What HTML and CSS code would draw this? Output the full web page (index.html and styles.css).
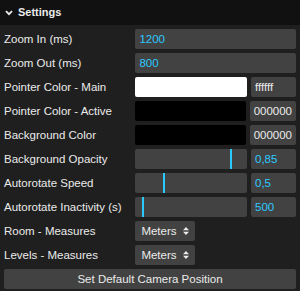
FILE: index.html
```html
<!DOCTYPE html>
<html lang="en">
<head>
<meta charset="UTF-8">
<title>Settings</title>
<link rel="stylesheet" href="styles.css">
</head>
<body>

<div class="gui">
  <div class="title">
    <svg class="chevron" width="8" height="6" viewBox="0 0 8 6"><path d="M1 1.2 L4 4.2 L7 1.2" fill="none" stroke="#ebebeb" stroke-width="1.8"/></svg>
    Settings
  </div>
  <div class="children">
    <div class="row">
      <div class="name">Zoom In (ms)</div>
      <div class="widget"><div class="field num">1200</div></div>
    </div>
    <div class="row">
      <div class="name">Zoom Out (ms)</div>
      <div class="widget"><div class="field num">800</div></div>
    </div>
    <div class="row">
      <div class="name">Pointer Color - Main</div>
      <div class="widget">
        <div class="swatch white"></div>
        <div class="field hex">ffffff</div>
      </div>
    </div>
    <div class="row">
      <div class="name">Pointer Color - Active</div>
      <div class="widget">
        <div class="swatch black"></div>
        <div class="field hex">000000</div>
      </div>
    </div>
    <div class="row">
      <div class="name">Background Color</div>
      <div class="widget">
        <div class="swatch black"></div>
        <div class="field hex">000000</div>
      </div>
    </div>
    <div class="row">
      <div class="name">Background Opacity</div>
      <div class="widget">
        <div class="slider"><div class="fill" style="width: 84.5%"></div></div>
        <div class="field num side">0,85</div>
      </div>
    </div>
    <div class="row">
      <div class="name">Autorotate Speed</div>
      <div class="widget">
        <div class="slider"><div class="fill" style="width: 25%"></div></div>
        <div class="field num side">0,5</div>
      </div>
    </div>
    <div class="row">
      <div class="name">Autorotate Inactivity (s)</div>
      <div class="widget">
        <div class="slider"><div class="fill" style="width: 5.5%"></div></div>
        <div class="field num side">500</div>
      </div>
    </div>
    <div class="row">
      <div class="name">Room - Measures</div>
      <div class="widget">
        <div class="select">Meters
          <svg class="arrows" width="6" height="8" viewBox="0 0 6 8"><path d="M3 0 L6 3.2 H0 Z M3 8 L6 4.8 H0 Z" fill="#ebebeb"/></svg>
        </div>
      </div>
    </div>
    <div class="row">
      <div class="name">Levels - Measures</div>
      <div class="widget">
        <div class="select">Meters
          <svg class="arrows" width="6" height="8" viewBox="0 0 6 8"><path d="M3 0 L6 3.2 H0 Z M3 8 L6 4.8 H0 Z" fill="#ebebeb"/></svg>
        </div>
      </div>
    </div>
    <div class="row">
      <div class="button">Set Default Camera Position</div>
    </div>
  </div>
</div>

</body>
</html>
```

FILE: styles.css
```css
/* settings panel, lil-gui look */
body {
  margin: 0;
  background-color: #1f1f1f;
  font-family: "Liberation Sans", Arial, sans-serif;
  font-size: 11.5px;
  color: #ebebeb;
}
.gui {
  width: 300px;
  background-color: #1f1f1f;
}
.title {
  height: 25px;
  line-height: 25px;
  padding: 0 4px;
  background-color: #111111;
  font-weight: bold;
  font-size: 11px;
  display: flex;
  align-items: center;
}
.chevron {
  margin: 0 5px 0 1px;
}
.children {
  display: flex;
  flex-direction: column;
  gap: 4px;
  padding: 4px 0;
}
.row {
  display: flex;
  align-items: center;
  height: 20px;
  padding: 0 4px;
}
.name {
  flex: 0 0 45%;
  white-space: nowrap;
}
.widget {
  flex: 1;
  display: flex;
  height: 20px;
  min-width: 0;
}
.field {
  height: 20px;
  line-height: 20px;
  padding: 0 4px;
  background-color: #424242;
  border-radius: 2px;
  box-sizing: border-box;
}
.field.num {
  flex: 1;
  color: #2cc9ff;
}
.field.side,
.field.hex {
  flex: 0 0 45px;
  margin-left: 4px;
}
.swatch {
  flex: 1;
  height: 20px;
  border-radius: 2px;
}
.white {
  background-color: #ffffff;
}
.black {
  background-color: #000000;
}
.slider {
  flex: 1;
  height: 20px;
  background-color: #424242;
  border-radius: 2px;
  overflow: hidden;
}
.fill {
  height: 100%;
  border-right: 2px solid #2cc9ff;
  box-sizing: content-box;
}
.select {
  height: 20px;
  line-height: 20px;
  padding: 0 6px;
  background-color: #424242;
  border-radius: 2px;
  display: flex;
  align-items: center;
  gap: 6px;
}
.button {
  flex: 1;
  height: 20px;
  line-height: 20px;
  text-align: center;
  background-color: #424242;
  border-radius: 2px;
}
```
